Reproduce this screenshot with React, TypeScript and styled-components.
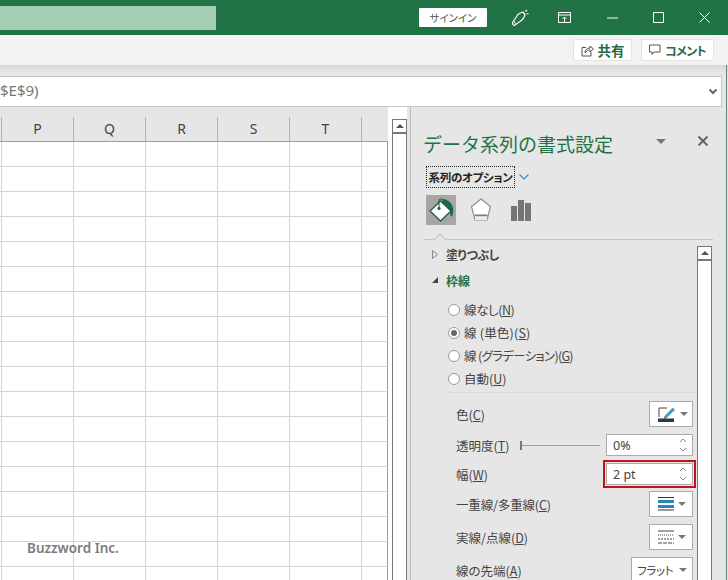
import React from 'react';
import styled, { createGlobalStyle } from 'styled-components';

const GlobalStyle = createGlobalStyle`
    html, body {
        margin: 0;
        padding: 0;
        width: 728px;
        height: 580px;
        overflow: hidden;
        background: #e6e6e6;
        font-family: 'Noto Sans CJK JP', 'Noto Sans', sans-serif;
        font-feature-settings: 'palt';
    }
`;

const Window = styled.div`
    width: 728px;
    height: 580px;
    display: flex;
    flex-direction: column;
    overflow: hidden;
    position: relative;

    &::after {
        content: '';
        position: absolute;
        left: 726px;
        top: 65px;
        bottom: 0;
        width: 1px;
        background: #4f9070;
    }
`;

const TitleBar = styled.div`
    height: 35px;
    flex: none;
    background: #217346;
    display: flex;
    align-items: center;
`;

const SearchBox = styled.div`
    width: 216px;
    height: 24px;
    background: #a4cfb5;
    margin-right: 203px;
`;

const SignIn = styled.div`
    width: 68px;
    height: 19px;
    background: #fff;
    border-radius: 1px;
    color: #555;
    font-size: 10.5px;
    line-height: 19px;
    text-align: center;
`;

const TitleIcon = styled.div<{ $left: number }>`
    width: 20px;
    height: 20px;
    margin-left: ${p => p.$left}px;
    display: flex;
    align-items: center;
    justify-content: center;
`;

const RibbonStrip = styled.div`
    height: 30px;
    flex: none;
    background: #f3f2f1;
    display: flex;
    align-items: center;
    justify-content: flex-end;
    gap: 9px;
    padding-right: 14px;
    box-sizing: border-box;
`;

const RibbonButton = styled.div<{ $width: number; $tight?: boolean }>`
    width: ${p => p.$width}px;
    height: 22px;
    box-sizing: border-box;
    background: #fff;
    border: 1px solid #e4e3e2;
    border-radius: 2px;
    display: flex;
    align-items: center;
    justify-content: center;
    gap: 4px;
    color: #2a6a4a;
    font-size: ${p => (p.$tight ? 12 : 13.5)}px;
    letter-spacing: ${p => (p.$tight ? '-0.6px' : '0')};
    font-weight: 700;
`;

const ShadowBand = styled.div`
    height: 11px;
    flex: none;
    background: linear-gradient(#d6d6d6, #e6e6e6 70%);
`;

const FormulaRow = styled.div`
    height: 31px;
    flex: none;
    width: 722px;
    box-sizing: border-box;
    background: #fff;
    border: 1px solid #c6c6c6;
    border-left: none;
    display: flex;
    align-items: center;
    justify-content: space-between;
    padding-right: 3px;
    color: #777;
    font-family: 'Noto Sans', sans-serif;
    font-size: 15px;
`;

const FormulaText = styled.span`
    margin-top: -3px;
`;

const Workspace = styled.div`
    flex: 1;
    display: flex;
    min-height: 0;
`;

const SheetArea = styled.div`
    width: 407px;
    flex: none;
    display: flex;
    background: #fff;
    position: relative;
`;

const SheetMain = styled.div`
    width: 388px;
    flex: none;
    display: flex;
    flex-direction: column;
    padding-top: 10px;
    background: linear-gradient(#e6e6e6 35px, #fff 35px);
    box-sizing: border-box;
`;

const HeaderRow = styled.div`
    display: grid;
    grid-template-columns: 2px repeat(5, 72px) 27px;
    height: 25px;
    box-sizing: border-box;
    border-bottom: 1px solid #9c9c9c;
`;

const HeaderCell = styled.div`
    box-sizing: border-box;
    border-right: 1px solid #b4b4b4;
    color: #444;
    font-family: 'Noto Sans', sans-serif;
    font-size: 14px;
    line-height: 24px;
    text-align: center;

    &:last-child {
        border-right: none;
    }
`;

const Grid = styled.div`
    display: grid;
    grid-template-columns: 2px repeat(5, 72px) 27px;
    grid-auto-rows: 25px;
    border-right: 1px solid #9c9c9c;
    width: 388px;
    box-sizing: border-box;
`;

const GridCell = styled.div`
    box-sizing: border-box;
    border-right: 1px solid #d4d4d4;
    border-bottom: 1px solid #d4d4d4;

    &:nth-child(7n) {
        border-right: none;
    }
`;

const Watermark = styled.div`
    position: absolute;
    left: 27px;
    top: 432px;
    color: #7c7c7c;
    font-family: 'Noto Sans', sans-serif;
    font-size: 13.5px;
    font-weight: 600;
`;

const SheetScroll = styled.div`
    width: 15px;
    margin: 12px 0 0 4px;
    box-sizing: border-box;
    border-left: 1px solid #777;
    border-right: 1px solid #777;
    border-top: 1px solid #777;
    background: #fff;
`;

const ScrollUp = styled.div`
    height: 14px;
    box-sizing: border-box;
    border-bottom: 2px solid #777;
    display: flex;
    align-items: center;
    justify-content: center;
`;

const UpTriangle = styled.div`
    width: 0;
    height: 0;
    border-left: 4px solid transparent;
    border-right: 4px solid transparent;
    border-bottom: 4px solid #555;
`;

const Pane = styled.div`
    margin-left: 3px;
    flex: 1;
    background: #e6e6e6;
    border-left: 1px solid #bdbdbd;
    padding-top: 15px;
    min-width: 0;
`;

const PaneHead = styled.div`
    padding-left: 12px;
    display: flex;
    align-items: center;
    height: 44px;
`;

const PaneTitle = styled.div`
    width: 233px;
    color: #217346;
    font-size: 19px;
    font-feature-settings: normal;
    line-height: 30px;
    white-space: nowrap;
`;

const PaneMenu = styled.div`
    width: 0;
    height: 0;
    margin-top: -6px;
    border-left: 5px solid transparent;
    border-right: 5px solid transparent;
    border-top: 5px solid #777;
`;

const PaneClose = styled.div`
    margin-left: 32px;
    margin-top: -6px;
    display: flex;
`;

const OptionRow = styled.div`
    margin: 0 0 0 15px;
    height: 22px;
    display: flex;
    align-items: center;
    gap: 3px;
`;

const OptionLabel = styled.div`
    width: 89px;
    height: 22px;
    box-sizing: border-box;
    border: 1px dotted #222;
    color: #222;
    font-size: 11.5px;
    letter-spacing: -0.3px;
    font-weight: 700;
    line-height: 20px;
    text-align: center;
    white-space: nowrap;
`;

const TabRow = styled.div`
    margin: 7px 0 0 15px;
    height: 30px;
    display: flex;
    gap: 10px;
`;

const TabIcon = styled.div<{ $active?: boolean }>`
    width: 30px;
    height: 30px;
    background: ${p => (p.$active ? '#a6a6a6' : 'transparent')};
    display: flex;
    align-items: center;
    justify-content: center;
`;

const TabRule = styled.div`
    margin: 14px 0 0 13px;
    width: 289px;
    height: 1px;
    background: #c4c4c4;
    position: relative;

    &::after {
        content: '';
        position: absolute;
        left: 12px;
        top: -4px;
        width: 7px;
        height: 7px;
        background: #e6e6e6;
        border-left: 1px solid #c4c4c4;
        border-top: 1px solid #c4c4c4;
        transform: rotate(45deg);
    }
`;

const PaneBody = styled.div`
    display: flex;
    margin-top: 1px;
`;

const PaneContent = styled.div`
    width: 286px;
    flex: none;
`;

const PaneScroll = styled.div`
    width: 15px;
    height: 340px;
    margin-top: 5px;
    box-sizing: border-box;
    border: 1px solid #777;
    border-bottom: none;
    background: #fff;
`;

const Section = styled.div<{ $open?: boolean }>`
    height: 26px;
    display: flex;
    align-items: center;
    padding-left: 21px;
    gap: 8px;
    color: ${p => (p.$open ? '#217346' : '#444')};
    font-size: 12px;
    letter-spacing: ${p => (p.$open ? '0' : '-0.5px')};
    font-weight: 700;
`;

const ClosedTriangle = styled.div`
    width: 6px;
    height: 9px;
    display: flex;
`;

const OpenArrow = styled.div`
    width: 0;
    height: 0;
    border-left: 6px solid transparent;
    border-bottom: 6px solid #444;
`;

const RadioList = styled.div`
    margin-top: 5px;
    padding-left: 37px;
    display: flex;
    flex-direction: column;
    height: 91px;
`;

const RadioRow = styled.div`
    height: 23px;
    flex: none;
    display: flex;
    align-items: center;
    gap: 4px;
    color: #444;
    font-size: 12.5px;
    white-space: nowrap;
`;

const RadioDot = styled.div<{ $checked?: boolean }>`
    width: 12px;
    height: 12px;
    box-sizing: border-box;
    border-radius: 50%;
    border: 1px solid #9a9a9a;
    background: #fff;
    display: flex;
    align-items: center;
    justify-content: center;

    &::after {
        content: '';
        width: 6px;
        height: 6px;
        border-radius: 50%;
        background: ${p => (p.$checked ? '#666' : 'transparent')};
    }
`;

const Divider = styled.div`
    margin: 3px 0 0 37px;
    width: 249px;
    height: 1px;
    background: #dadada;
`;

const FieldList = styled.div`
    margin-top: 8px;
    padding-left: 45px;
    width: 237px;
    display: flex;
    flex-direction: column;
    gap: 7px;
`;

const FieldRow = styled.div<{ $height: number; $pull?: number }>`
    height: ${p => p.$height}px;
    margin-top: ${p => p.$pull ?? 0}px;
    display: flex;
    align-items: center;
    justify-content: space-between;
    color: #444;
    font-size: 12.5px;
    white-space: nowrap;
`;

const SliderGroup = styled.div`
    display: flex;
    align-items: center;
    gap: 6px;
`;

const SliderLine = styled.div`
    width: 80px;
    height: 1px;
    background: #a0a0a0;
    position: relative;

    &::before {
        content: '';
        position: absolute;
        left: 0;
        top: -4px;
        width: 2px;
        height: 9px;
        background: #777;
    }
`;

const IconButton = styled.div`
    width: 44px;
    height: 26px;
    box-sizing: border-box;
    background: #fff;
    border: 1px solid #ababab;
    display: flex;
    align-items: center;
    padding-left: 8px;
    gap: 4px;
`;

const DropTriangle = styled.div`
    width: 0;
    height: 0;
    border-left: 4px solid transparent;
    border-right: 4px solid transparent;
    border-top: 4px solid #777;
`;

const SpinBox = styled.div<{ $marked?: boolean }>`
    width: 87px;
    height: 22px;
    box-sizing: border-box;
    background: #fff;
    border: 1px solid #ababab;
    display: flex;
    align-items: center;
    justify-content: space-between;
    padding: 0 4px 0 6px;
    color: #444;
    font-family: 'Noto Sans', sans-serif;
    font-size: 12.5px;
    outline: ${p => (p.$marked ? '2px solid #c8101a' : 'none')};
    outline-offset: 1px;
`;

const SelectBox = styled.div`
    width: 62px;
    height: 26px;
    box-sizing: border-box;
    background: #fff;
    border: 1px solid #ababab;
    display: flex;
    align-items: center;
    justify-content: space-between;
    padding: 0 5px;
    color: #444;
    font-size: 11.5px;
    letter-spacing: -0.3px;
`;

const Key = styled.span`
    text-decoration: underline;
`;

const LabelText = styled.span<{ $squeeze?: number }>`
    letter-spacing: ${p => p.$squeeze ?? 0}px;
`;

const Label: React.FC<{ text: string; hotkey: string; squeeze?: number }> = ({ text, hotkey, squeeze }) => (
    <LabelText $squeeze={squeeze}>
        {text}(<Key>{hotkey}</Key>)
    </LabelText>
);

const Spinner = () => (
    <svg width="10" height="18" viewBox="0 0 10 18" fill="none" stroke="#888" strokeWidth="1">
        <path d="M2 6l3-3 3 3M2 12l3 3 3-3" />
    </svg>
);

const columns = ['', 'P', 'Q', 'R', 'S', 'T', ''];
const rowCount = 18;

export default function App() {
    return (
        <Window>
            <GlobalStyle />
            <TitleBar>
                <SearchBox />
                <SignIn>サインイン</SignIn>
                <TitleIcon $left={23}>
                    <svg width="18" height="18" viewBox="0 0 18 18" fill="none" stroke="#fff" strokeWidth="1.100">
                        <path d="M1.500 13.500L7 5.500c1.500-1 3-1.800 5-2.500l2 3c-.6 2-1.500 3.500-3 5l-7.500 5.500c-1.200-.2-2-1.500-2-3z" />
                        <path d="M4.500 14.500L3 12.500M12 3l2 3M14.500 2.500L16 1M15.500 5l2-.5" />
                    </svg>
                </TitleIcon>
                <TitleIcon $left={25}>
                    <svg width="14" height="12" viewBox="0 0 14 12" fill="none" stroke="#fff" strokeWidth="1">
                        <path d="M.5.5h12v10H.5zM.5 3h12M6.500 10V5M4.500 7l2-2 2 2" />
                    </svg>
                </TitleIcon>
                <TitleIcon $left={27}>
                    <svg width="11" height="2" viewBox="0 0 11 2"><path d="M0 1h11" stroke="#fff" /></svg>
                </TitleIcon>
                <TitleIcon $left={26}>
                    <svg width="11" height="11" viewBox="0 0 11 11" fill="none" stroke="#fff"><path d="M.5.5h10v10H.5z" /></svg>
                </TitleIcon>
                <TitleIcon $left={26}>
                    <svg width="11" height="11" viewBox="0 0 11 11" fill="none" stroke="#fff"><path d="M.5.5l10 10M10.500.5l-10 10" /></svg>
                </TitleIcon>
            </TitleBar>
            <RibbonStrip>
                <RibbonButton $width={59}>
                    <svg width="13" height="13" viewBox="0 0 13 13" fill="none" stroke="#555" strokeWidth="1">
                        <path d="M5 3.500H1v8.500h9V8M4 9c0-3 2-5 5-5V2l3.500 3L9 8V6C7 6 5.500 7 4 9z" />
                    </svg>
                    共有
                </RibbonButton>
                <RibbonButton $width={73} $tight>
                    <svg width="12" height="12" viewBox="0 0 12 12" fill="none" stroke="#555" strokeWidth="1">
                        <path d="M.5 1h10.500v7H5l-2 2.500V8H.5z" />
                    </svg>
                    コメント
                </RibbonButton>
            </RibbonStrip>
            <ShadowBand />
            <FormulaRow>
                <FormulaText>$E$9)</FormulaText>
                <svg width="10" height="7" viewBox="0 0 10 7" fill="none" stroke="#666" strokeWidth="2">
                    <path d="M1.500 1.500L5 5l3.500-3.500" />
                </svg>
            </FormulaRow>
            <Workspace>
                <SheetArea>
                    <SheetMain>
                        <HeaderRow>
                            {columns.map((c, i) => (
                                <HeaderCell key={i}>{c}</HeaderCell>
                            ))}
                        </HeaderRow>
                        <Grid>
                            {Array.from({ length: rowCount * 7 }, (_, i) => (
                                <GridCell key={i} />
                            ))}
                        </Grid>
                    </SheetMain>
                    <SheetScroll>
                        <ScrollUp>
                            <UpTriangle />
                        </ScrollUp>
                    </SheetScroll>
                    <Watermark>Buzzword Inc.</Watermark>
                </SheetArea>
                <Pane>
                    <PaneHead>
                        <PaneTitle>データ系列の書式設定</PaneTitle>
                        <PaneMenu />
                        <PaneClose>
                            <svg width="10" height="10" viewBox="0 0 10 10" fill="none" stroke="#666" strokeWidth="2">
                                <path d="M.5.5l9 9M9.500.5l-9 9" />
                            </svg>
                        </PaneClose>
                    </PaneHead>
                    <OptionRow>
                        <OptionLabel>系列のオプション</OptionLabel>
                        <svg width="12" height="8" viewBox="0 0 12 8" fill="none" stroke="#3f8fc4" strokeWidth="1.200">
                            <path d="M1.500 1.500L6 6l4.500-4.500" />
                        </svg>
                    </OptionRow>
                    <TabRow>
                        <TabIcon $active>
                            <svg width="30" height="30" viewBox="0 0 30 30">
                                <path d="M17 4c5 .5 9 4 10 9 .5 3 .2 6-.8 8-1 1.500-2 0-2-3 0-2-.2-3-1.200-4.500L17 8z" fill="#1d6b43" />
                                <path d="M14.500 6L25 16 14.500 26 4 16z" fill="#fff" stroke="#1d5f3d" strokeWidth="1.300" />
                                <path d="M13 13V6a2 2 0 0 1 4 0v3" fill="none" stroke="#1d5f3d" strokeWidth="1.100" />
                                <circle cx="13" cy="13.500" r="1.600" fill="#1d5f3d" />
                            </svg>
                        </TabIcon>
                        <TabIcon>
                            <svg width="22" height="26" viewBox="0 0 22 26">
                                <path d="M11 2l9.500 7.500L17 23H5L1.500 9.500z" fill="#fff" stroke="#8a8a8a" strokeWidth="1.100" />
                                <path d="M4.500 18.500h13" stroke="#7a7a7a" strokeWidth="2" />
                                <path d="M5 19.500V23h12v-3.500" fill="#ececec" stroke="none" />
                            </svg>
                        </TabIcon>
                        <TabIcon>
                            <svg width="20" height="22" viewBox="0 0 20 22" fill="#757575">
                                <path d="M0 7h6v15H0zM7 1h6v21H7zM14 4h6v18h-6z" />
                            </svg>
                        </TabIcon>
                    </TabRow>
                    <TabRule />
                    <PaneBody>
                        <PaneContent>
                            <Section>
                                <ClosedTriangle>
                                    <svg width="6" height="9" viewBox="0 0 6 9" fill="none" stroke="#888">
                                        <path d="M.5.500l5 4-5 4z" />
                                    </svg>
                                </ClosedTriangle>
                                塗りつぶし
                            </Section>
                            <Section $open>
                                <OpenArrow />
                                枠線
                            </Section>
                            <RadioList>
                                <RadioRow>
                                    <RadioDot />
                                    <Label text="線なし" hotkey="N" squeeze={-0.4} />
                                </RadioRow>
                                <RadioRow>
                                    <RadioDot $checked />
                                    <Label text="線 (単色)" hotkey="S" squeeze={0.2} />
                                </RadioRow>
                                <RadioRow>
                                    <RadioDot />
                                    <Label text="線 (グラデーション)" hotkey="G" squeeze={-0.7} />
                                </RadioRow>
                                <RadioRow>
                                    <RadioDot />
                                    <Label text="自動" hotkey="U" />
                                </RadioRow>
                            </RadioList>
                            <Divider />
                            <FieldList>
                                <FieldRow $height={26}>
                                    <Label text="色" hotkey="C" />
                                    <IconButton>
                                        <svg width="18" height="16" viewBox="0 0 18 16">
                                            <path d="M1 11V2h8" fill="none" stroke="#444" />
                                            <path d="M7 10l-1 2.500 2.500-.7 8-8-1.800-1.800z" fill="#3f9ad0" stroke="#2a6f9c" strokeWidth=".6" />
                                            <path d="M0 12.500h16V16H0z" fill="#2a3b47" />
                                        </svg>
                                        <DropTriangle />
                                    </IconButton>
                                </FieldRow>
                                <FieldRow $height={22}>
                                    <Label text="透明度" hotkey="T" />
                                    <SliderGroup>
                                        <SliderLine />
                                        <SpinBox>
                                            0%
                                            <Spinner />
                                        </SpinBox>
                                    </SliderGroup>
                                </FieldRow>
                                <FieldRow $height={22}>
                                    <Label text="幅" hotkey="W" />
                                    <SpinBox $marked>
                                        2 pt
                                        <Spinner />
                                    </SpinBox>
                                </FieldRow>
                                <FieldRow $height={26} $pull={-1}>
                                    <Label text="一重線/多重線" hotkey="C" squeeze={-0.15} />
                                    <IconButton>
                                        <svg width="16" height="14" viewBox="0 0 16 14">
                                            <path d="M0 .5h16M0 13h16" stroke="#333" />
                                            <path d="M0 3h16v3H0zM0 8h16v3H0z" fill="#2f86b5" />
                                        </svg>
                                        <DropTriangle />
                                    </IconButton>
                                </FieldRow>
                                <FieldRow $height={26}>
                                    <Label text="実線/点線" hotkey="D" />
                                    <IconButton>
                                        <svg width="16" height="14" viewBox="0 0 16 14" fill="none" stroke="#444">
                                            <path d="M0 1h16" />
                                            <path d="M0 5h16" strokeDasharray="1 1" />
                                            <path d="M0 9h16" strokeDasharray="2 1" />
                                            <path d="M0 13h16" strokeDasharray="4 1" />
                                        </svg>
                                        <DropTriangle />
                                    </IconButton>
                                </FieldRow>
                                <FieldRow $height={26}>
                                    <Label text="線の先端" hotkey="A" />
                                    <SelectBox>
                                        フラット
                                        <DropTriangle />
                                    </SelectBox>
                                </FieldRow>
                            </FieldList>
                        </PaneContent>
                        <PaneScroll>
                            <ScrollUp>
                                <UpTriangle />
                            </ScrollUp>
                        </PaneScroll>
                    </PaneBody>
                </Pane>
            </Workspace>
        </Window>
    );
}
